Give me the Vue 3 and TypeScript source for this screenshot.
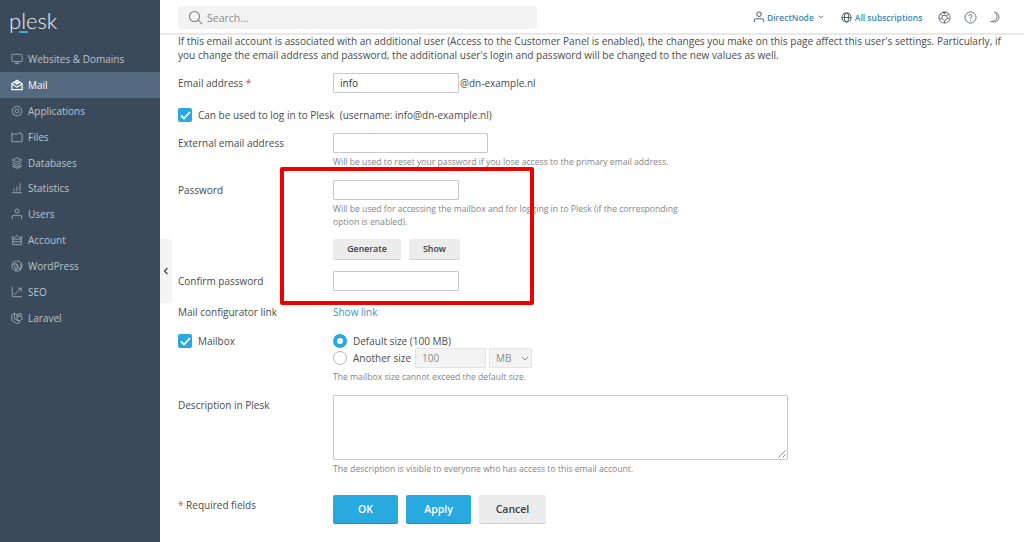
<script setup lang="ts">
interface NavItem { label: string; icon: string; active?: boolean }
const nav: NavItem[] = [
  { label: 'Websites & Domains', icon: 'monitor' },
  { label: 'Mail', icon: 'mail', active: true },
  { label: 'Applications', icon: 'gear' },
  { label: 'Files', icon: 'folder' },
  { label: 'Databases', icon: 'db' },
  { label: 'Statistics', icon: 'stats' },
  { label: 'Users', icon: 'user' },
  { label: 'Account', icon: 'crown' },
  { label: 'WordPress', icon: 'wp' },
  { label: 'SEO', icon: 'seo' },
  { label: 'Laravel', icon: 'laravel' }
]
</script>

<template>
  <div class="page">
    <aside class="sidebar">
      <div class="logo"><span class="logo-text">plesk</span><i class="logo-bar"></i></div>
      <nav class="nav">
        <div v-for="item in nav" :key="item.label" class="nav-item" :class="{ active: item.active }">
          <svg class="nav-icon" viewBox="0 0 14 14" fill="none" stroke="currentColor" stroke-width="1.1">
            <template v-if="item.icon === 'monitor'"><rect x="1" y="1.5" width="12" height="8.5" rx="1" /><path d="M4 12.5h6M7 10v2.5" /></template>
            <template v-else-if="item.icon === 'mail'"><path d="M1 5.500 7 1.500l6 4v7H1z" stroke-width="1.400" /><path d="M1.500 6 7 9.500 12.500 6" stroke-width="1.400" /><path d="M3.500 4.500 7 2.500l3.500 2L7 7z" fill="currentColor" stroke="none" /></template>
            <template v-else-if="item.icon === 'gear'"><path d="M7 1l1.300 1.300 1.900-.2.600 1.800 1.700.9-.5 1.800.9 1.600-1.400 1.300-.2 1.900-1.900.3L8.200 13 7 12l-1.200 1-1.200-1.300-1.900-.3-.2-1.900L1.100 8.200 2 6.600l-.5-1.800 1.700-.9.600-1.800 1.900.2z" /><circle cx="7" cy="7" r="2.200" /></template>
            <template v-else-if="item.icon === 'folder'"><path d="M1 2v10.500h12V3.500h-1.500M1 3.500h7.500M9.500 1.500v2M11 1.500v2" /></template>
            <template v-else-if="item.icon === 'db'"><path d="M7 1l5.500 2.500L7 6 1.500 3.500z" /><path d="M1.500 6.300 7 8.800l5.500-2.500M1.500 9 7 11.500 12.500 9M1.500 10.800 7 13.200l5.500-2.400" /></template>
            <template v-else-if="item.icon === 'stats'"><path d="M1 12.500h12M3.500 11V7.500M7 11V5M10.500 11V1.500" /></template>
            <template v-else-if="item.icon === 'user'"><circle cx="7" cy="3.500" r="2.300" /><path d="M1.500 13v-2.500q0-2 2-2h7q2 0 2 2V13" /></template>
            <template v-else-if="item.icon === 'crown'"><path d="M2 6.500 1 3l3 1.500L7 1.500l3 3L13 3l-1 3.500M2 6h10v6.500H2zM2 9h10" /></template>
            <template v-else-if="item.icon === 'wp'"><circle cx="7" cy="7" r="6" /><path d="M3 4.500 6 12 7.500 7.500 6 4M6 4.500H3M7 4.500 10 12l1.500-4.500q.5-2-.5-3" /></template>
            <template v-else-if="item.icon === 'seo'"><path d="M1.500 1v11.500H13M3.500 10.500 11.500 3M8 2.500h4v4" /></template>
            <template v-else><path d="M1 3l3-1.500L7 3v6l3 1.500v2L7 13.500 1 10zM4 1.500V8l6 3M7 6l3-1.500L13 6v2.500L10 10M10 1.500 7 3l3 1.500L13 3z" /></template>
          </svg>
          <span>{{ item.label }}</span>
        </div>
      </nav>
    </aside>

    <div class="handle">
      <svg width="6" height="8" viewBox="0 0 6 8" fill="none" stroke="#3f4a57" stroke-width="1.300"><path d="M4.500 1 1.500 4l3 3" /></svg>
    </div>

    <div class="main">
      <header class="topbar">
        <div class="search">
          <svg class="search-icon" width="15" height="15" viewBox="0 0 15 15" fill="none" stroke="#7a7f85" stroke-width="1.100"><circle cx="6.500" cy="6.500" r="5" /><path d="m10.200 10.200 4 4" /></svg>
          <span>Search...</span>
        </div>
        <div class="top-right">
          <svg class="first" width="12" height="12" viewBox="0 0 14 14" fill="none" stroke="#5f6872" stroke-width="1.200"><circle cx="7" cy="3.800" r="2.600" /><path d="M1.500 13v-1.500q0-2.500 2.500-2.500h6q2.500 0 2.500 2.500V13" /></svg>
          <span class="t-link">DirectNode</span>
          <svg class="caret" width="6" height="4" viewBox="0 0 6 4" fill="none" stroke="#6b7580" stroke-width="1"><path d="m.8.800 2.200 2 2.200-2" /></svg>
          <svg class="globe" width="11" height="11" viewBox="0 0 12 12" fill="none" stroke="#56606b" stroke-width="1.100"><circle cx="6" cy="6" r="5" /><ellipse cx="6" cy="6" rx="2.300" ry="5" /><path d="M1 6h10" /></svg>
          <span class="t-link">All subscriptions</span>
          <svg class="team" width="13" height="13" viewBox="0 0 14 14" fill="none" stroke="#5f6872" stroke-width="1"><circle cx="7" cy="7" r="6" /><path d="M5 4.800h4l1.200 3.200L7 10.500 3.800 8z" /><path d="M2 3.500 5 4.800M12 3.500 9 4.800" /><path d="M1.500 8.500l2.300-.5M12.500 8.500 10.200 8M7 10.500V13" /><path d="M5 1.500h4L7 3z" fill="#5f6872" /></svg>
          <svg class="qmark" width="13" height="13" viewBox="0 0 14 14" fill="none" stroke="#5f6872" stroke-width="1"><circle cx="7" cy="7" r="6" /><path d="M5.200 5.500q.1-1.800 1.800-1.800t1.800 1.600Q8.800 6.300 7.700 6.900 7 7.300 7 8.500M7 9.800v1.100" /></svg>
          <svg class="moon" width="10" height="14" viewBox="0 0 12 14" fill="none" stroke="#5f6872" stroke-width="1"><path d="M5.500 1Q9 3 8.500 7.500 8 11 3.500 12.500 1.500 12.800 1 12.300 6 14 9.500 11 12 8 10 4 8.500 1.500 5.500 1z" /></svg>
        </div>
      </header>

      <section class="content">
        <p class="intro">If this email account is associated with an additional user (Access to the Customer Panel is enabled), the changes you make on this page affect this user's settings. Particularly, if you change the email address and password, the additional user's login and password will be changed to the new values as well.</p>

        <div class="row r-email">
          <label class="lbl">Email address <b class="req">*</b></label>
          <div class="val inline"><div class="input w126 filled">info</div><span class="domain">@dn-example.nl</span></div>
        </div>

        <div class="row r-login">
          <span class="check"><svg width="11" height="9" viewBox="0 0 11 9" fill="none" stroke="#fff" stroke-width="1.800"><path d="m1 4.500 3 3L10 1" /></svg></span>
          <span class="check-text">Can be used to log in to Plesk&nbsp; (username: info@dn-example.nl)</span>
        </div>

        <div class="row r-ext">
          <label class="lbl">External email address</label>
          <div class="val">
            <div class="input w155"></div>
            <p class="help first-help">Will be used to reset your password if you lose access to the primary email address.</p>
          </div>
        </div>

        <div class="row r-pass">
          <label class="lbl">Password</label>
          <div class="val">
            <div class="input w126"></div>
            <p class="help">Will be used for accessing the mailbox and for logging in to Plesk (if the corresponding option is enabled).</p>
            <div class="pw-btns"><button class="btn gen">Generate</button><button class="btn show">Show</button></div>
          </div>
        </div>

        <div class="row r-confirm">
          <label class="lbl">Confirm password</label>
          <div class="val"><div class="input w126"></div></div>
        </div>

        <div class="row r-link">
          <label class="lbl">Mail configurator link</label>
          <div class="val"><a class="link">Show link</a></div>
        </div>

        <div class="row r-mailbox">
          <label class="lbl box-lbl">
            <span class="check"><svg width="11" height="9" viewBox="0 0 11 9" fill="none" stroke="#fff" stroke-width="1.800"><path d="m1 4.500 3 3L10 1" /></svg></span>
            <span class="check-text">Mailbox</span>
          </label>
          <div class="val mailbox-val">
            <div class="radio-row"><span class="radio on"></span><span>Default size (100 MB)</span></div>
            <div class="radio-row second">
              <span class="radio"></span><span>Another size</span>
              <div class="input small-num">100</div>
              <div class="input small-sel">MB<svg width="8" height="5" viewBox="0 0 8 5" fill="none" stroke="#8a8f95" stroke-width="1"><path d="m1 1 3 3 3-3" /></svg></div>
            </div>
            <p class="help">The mailbox size cannot exceed the default size.</p>
          </div>
        </div>

        <div class="row r-desc">
          <label class="lbl">Description in Plesk</label>
          <div class="val">
            <div class="textarea"><svg class="grip" width="8" height="8" viewBox="0 0 8 8" stroke="#8a8a8a" stroke-width="1"><path d="M7.500.5l-7 7M7.500 4.500l-3 3" /></svg></div>
            <p class="help desc-help">The description is visible to everyone who has access to this email account.</p>
          </div>
        </div>

        <div class="row r-actions">
          <label class="lbl"><b class="req">*</b> Required fields</label>
          <div class="val actions">
            <button class="btn primary">OK</button>
            <button class="btn primary">Apply</button>
            <button class="btn cancel">Cancel</button>
          </div>
        </div>
      </section>
    </div>

    <div class="redbox"></div>
  </div>
</template>

<style>
html, body { margin: 0; padding: 0; background: #fff; overflow: hidden; }
</style>

<style scoped>
.page { position: relative; width: 1024px; height: 542px; display: flex; overflow: hidden; font-family: "Open Sans", "Noto Sans", sans-serif; font-size: 10px; color: #4b4b4b; background: #fff; }
.sidebar { width: 160px; flex: none; background: #3a4a5b; color: #bcc3ca; }
.logo { position: relative; height: 46.560px; padding: 7px 0 0 9px; box-sizing: border-box; }
.logo-text { display: block; font-family: Lato, "Open Sans", sans-serif; font-weight: 300; font-size: 22px; line-height: 28px; color: #e8edf1; }
.logo-bar { position: absolute; left: 19px; top: 31px; width: 9px; height: 2px; background: #35a8dc; }
.nav-item { height: 25.900px; box-sizing: border-box; padding: 0 0 1px 11px; display: flex; align-items: center; font-size: 10px; gap: 5px; }
.nav-item.active { background: #546a80; color: #fff; }
.nav-icon { width: 12px; height: 12px; flex: none; color: #9aa5af; }
.active .nav-icon { color: #fff; }
.handle { position: absolute; left: 160px; top: 239px; width: 12px; height: 64px; background: #f4f4f4; border-radius: 0 3px 3px 0; display: flex; align-items: center; justify-content: center; }
.main { flex: 1; min-width: 0; display: flex; flex-direction: column; }
.topbar { height: 35px; flex: none; box-sizing: border-box; border-bottom: 2px solid #e9e9e9; display: flex; align-items: flex-start; position: relative; }
.search { margin: 6px 0 0 18px; width: 359px; height: 23px; background: #f3f3f3; border-radius: 3px; display: flex; align-items: center; color: #8c8c8c; font-size: 10.500px; }
.search-icon { margin: 0 4px 0 10px; }
.top-right { position: absolute; left: 593px; top: 0; height: 34px; display: flex; align-items: center; }
.t-link { color: #3d87ad; font-size: 8.500px; font-weight: 600; white-space: nowrap; }
.first { margin-right: 2px; }
.caret { margin-left: 4px; }
.globe { margin-left: 17px; margin-right: 3px; }
.team { margin-left: 16px; }
.qmark { margin-left: 13px; }
.moon { margin-left: 13px; }
.content { padding: 0 0 0 18px; flex: 1; }
.intro { margin: -1px 0 0; width: 835px; font-size: 10.080px; line-height: 14px; height: 28px; color: #4b4b4b; }
.row { display: flex; align-items: flex-start; }
.lbl { width: 155px; flex: none; font-size: 10px; line-height: 16px; font-weight: 400; color: #4b4b4b; }
.req { color: #e8473f; font-weight: 400; }
.val { flex: none; }
.inline { display: flex; align-items: center; }
.input { box-sizing: border-box; height: 20px; border: 1px solid #c9c9c9; background: #fff; font-size: 10px; line-height: 18px; padding-left: 6px; border-radius: 1px; }
.filled { color: #333; }
.w126 { width: 126px; }
.w155 { width: 155px; }
.domain { font-size: 10px; margin-left: 1px; }
.r-email { margin-top: 11px; height: 20px; align-items: center; }
.r-login { margin-top: 14px; height: 16px; align-items: center; }
.check { box-sizing: border-box; width: 14px; height: 14px; background: #28a9e0; border-radius: 2px; display: inline-flex; align-items: center; justify-content: center; flex: none; }
.check-text { margin-left: 6px; font-size: 10px; white-space: nowrap; }
.r-ext { margin-top: 10px; }
.r-ext .lbl, .r-pass .lbl, .r-confirm .lbl, .r-desc .lbl, .r-actions .lbl { margin-top: 2px; }
.help { margin: 3px 0 0; font-size: 8.630px; color: #858585; line-height: 13px; width: 360px; }
.first-help, .desc-help { width: 400px; white-space: nowrap; }
.r-pass { margin-top: 11px; }
.pw-btns { display: flex; gap: 8px; margin-top: 10px; }
.btn { border: 0; padding: 0; font-family: inherit; cursor: pointer; border-radius: 2px; }
.gen, .show { height: 20px; background: #ececec; box-shadow: 0 1px 0 #d4d4d4; font-size: 8.800px; font-weight: 600; color: #37404a; }
.gen { width: 68px; }
.show { width: 51px; }
.r-confirm { margin-top: 12px; }
.r-link { margin-top: 13px; height: 16px; }
.link { color: #3f90bb; font-size: 10px; line-height: 16px; display: block; }
.r-mailbox { margin-top: 12px; }
.mailbox-val { margin-top: 1px; }
.box-lbl { display: flex; align-items: center; height: 16px; margin-top: 1px; }
.radio-row { display: flex; align-items: center; height: 16px; font-size: 10px; }
.second { height: 20px; margin-top: -1px; }
.radio { box-sizing: border-box; width: 14px; height: 14px; border: 1px solid #b9b9b9; border-radius: 50%; margin-right: 6px; flex: none; background: #fff; }
.radio.on { border: 4px solid #28a9e0; }
.small-num { width: 71px; margin-left: 4px; background: #f3f3f3; border-color: #e4e4e4; color: #8a8a8a; }
.small-sel { width: 43px; margin-left: 3px; background: #f3f3f3; border-color: #e4e4e4; color: #8a8a8a; display: flex; align-items: center; gap: 9px; padding-left: 6px; line-height: 20px; }
.r-desc { margin-top: 11px; }
.textarea { box-sizing: border-box; position: relative; width: 455px; height: 65px; border: 1px solid #c9c9c9; border-radius: 1px; }
.grip { position: absolute; right: 1px; bottom: 1px; }
.r-actions { margin-top: 19px; }
.actions { display: flex; gap: 8px; }
.primary { height: 28px; width: 65px; background: #28a9e0; color: #fff; font-size: 10.500px; font-weight: 600; box-shadow: 0 1px 0 #1f8fbf; }
.cancel { height: 28px; width: 67px; background: #ececec; color: #37404a; font-size: 10.500px; font-weight: 600; box-shadow: 0 1px 0 #cfcfcf; }
.redbox { position: absolute; left: 280px; top: 167px; width: 254px; height: 138px; box-sizing: border-box; border: 4px solid #ee0000; border-radius: 2px; pointer-events: none; }
</style>
